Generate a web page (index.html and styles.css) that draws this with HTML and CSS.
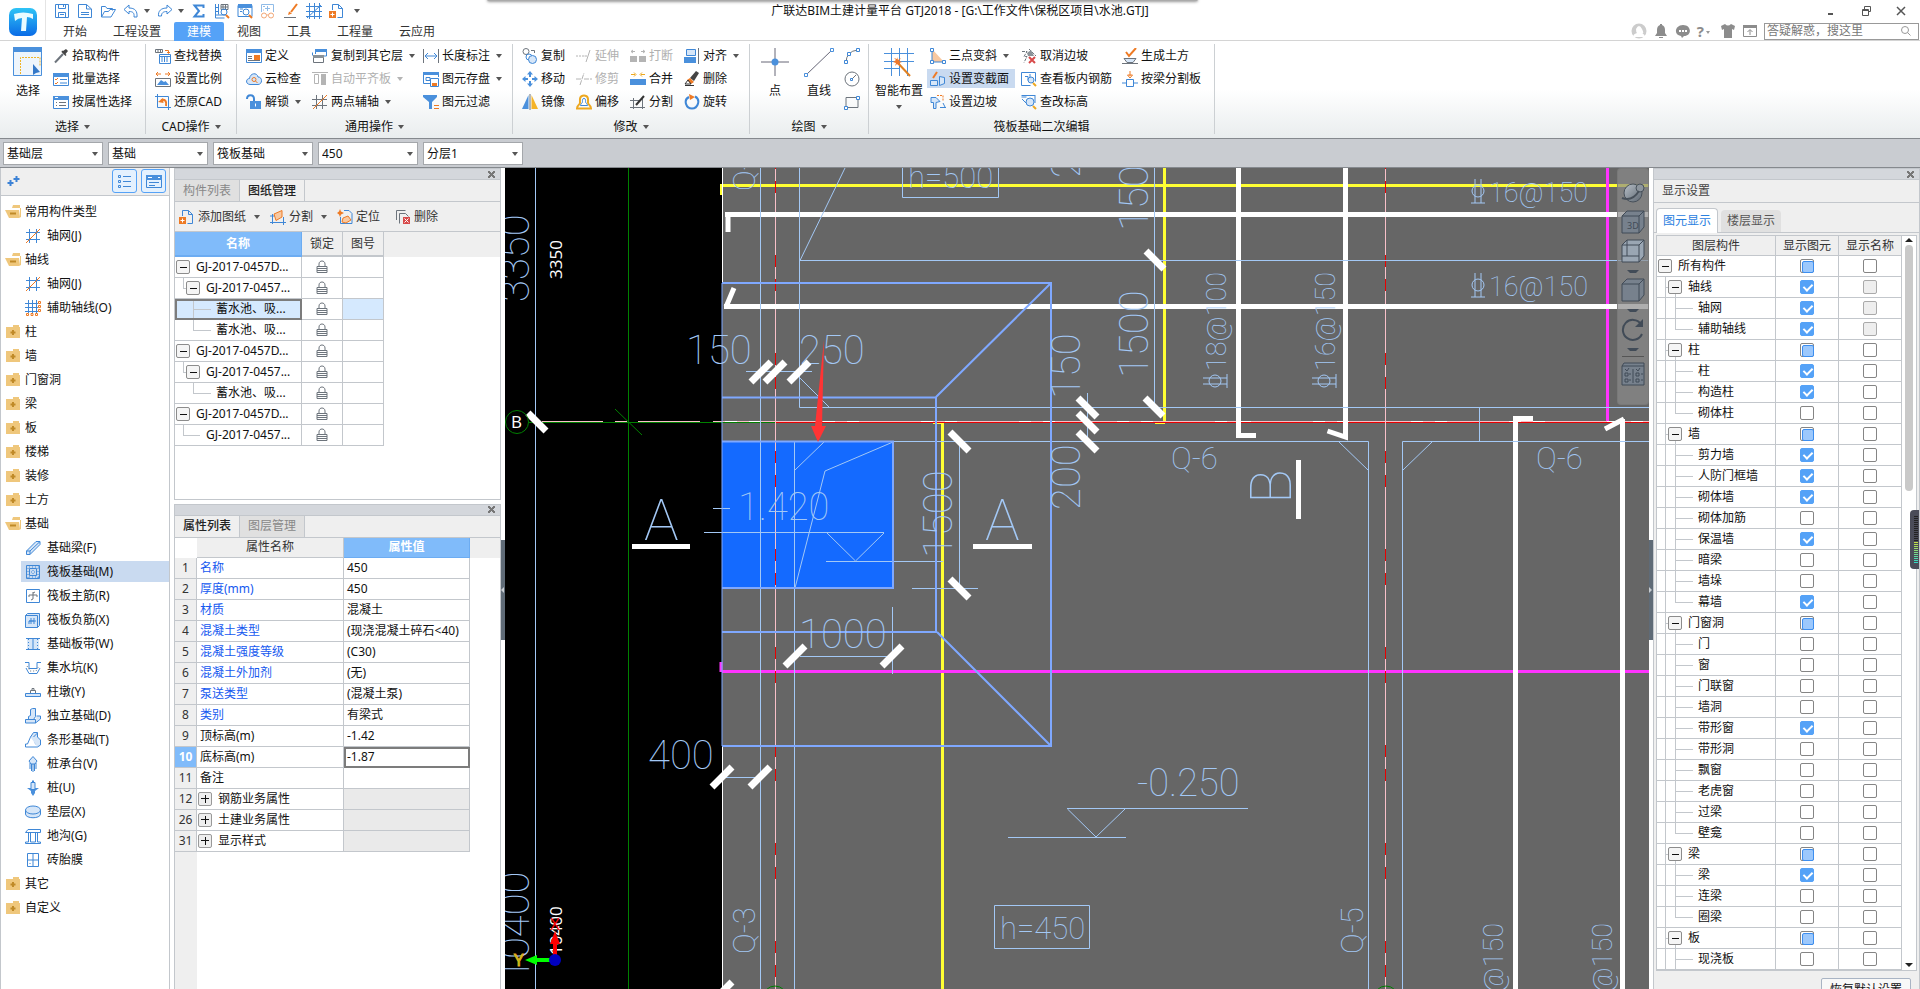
FILE: index.html
```html
<!DOCTYPE html>
<html lang="zh-CN">
<head>
<meta charset="utf-8">
<title>广联达BIM土建计量平台 GTJ2018</title>
<link rel="stylesheet" href="styles.css">
</head>
<body>
<svg class="sprite" aria-hidden="true">
  <defs>
    <linearGradient id="logo-fill" x1="0" y1="0" x2="0" y2="1"><stop offset="0" stop-color="#2fc4f6"/><stop offset="1" stop-color="#0a6be6"/></linearGradient>
    <linearGradient id="ball" x1="0" y1="0" x2="1" y2="1"><stop offset="0" stop-color="#b8c0c8"/><stop offset="1" stop-color="#5c6670"/></linearGradient>
  </defs>
  <symbol id="save" viewBox="0 0 16 16"><path class="b" d="M1.500 1.500h13v13h-13zM4.500 1.500v4h7v-4M4.500 14.500v-5h7v5M9.500 2v2M6 11.500h4"/></symbol>
  <symbol id="doc" viewBox="0 0 16 16"><path class="b" d="M1.500 14.500v-13h8l5 4.500v8.500zM9.500 1.500v4.500h5M4 9.500h8M4 11.500h8"/></symbol>
  <symbol id="open" viewBox="0 0 16 16"><path class="b" d="M1.500 14V3.500h4l1.500 2h5.500v2M1.500 14l3-5.500h4l1.500-2h5.500L11 14z"/></symbol>
  <symbol id="undo" viewBox="0 0 16 16"><path class="b" d="M1 6.500L6 2v3c6 0 8.500 3 8 9h-3c.5-4-1-5.500-5-5.500V11z"/></symbol>
  <symbol id="redo" viewBox="0 0 16 16"><path class="b" d="M15 6.500L10 2v3C4 5 1 8 1.500 13h3c0-3 1.500-4.500 5.500-4.500V11z"/></symbol>
  <symbol id="sigma" viewBox="0 0 16 16"><path class="b w2" d="M12.500 5V2.500h-9L8 8l-4.500 5.500h9V11"/></symbol>
  <symbol id="measure" viewBox="0 0 16 16"><path class="b" d="M1.500 1v14h9M1.500 12H12M4.500 1v10.500M2 4.500h2M2 8.500h2"/><path class="g" d="M7 1.500h7v5H7zM9 1.500v5M11.500 1.500v5M7 4h7"/><circle class="b" cx="10" cy="9" r="3"/><path class="o w2" d="M12 12l3 3"/></symbol>
  <symbol id="report" viewBox="0 0 16 16"><path class="b" d="M1 2.500h14v11H1zM3 6h3M3 8.500h2"/><path class="bf" d="M1 1h14v4H1z"/><circle class="b wf" cx="9" cy="9" r="3"/><path class="o w2" d="M12 12l3 3"/></symbol>
  <symbol id="glasses" viewBox="0 0 16 16"><path class="bl" d="M1.500 9V1.500h12V9M5 5.500h5M7.500 3v5M3 3.500h2M3 7h1"/><path class="ol" d="M1 12h13"/><circle class="ol wf" cx="4" cy="12.500" r="2.500"/><circle class="ol wf" cx="11" cy="12.500" r="2.500"/></symbol>
  <symbol id="pen" viewBox="0 0 16 16"><path class="o w2" d="M14 1L8 9"/><path class="of" d="M5 12l1-3.500 3 2z"/><path class="g" d="M1 14.500h12"/></symbol>
  <symbol id="grid3" viewBox="0 0 16 16"><path class="b" d="M3.500 0v16M8.500 0v16M13.500 0v16M0 3.500h16M0 8.500h16M0 13.500h16M1 15L15 2"/></symbol>
  <symbol id="adddoc" viewBox="0 0 16 16"><path class="b" d="M3.500 7V1.500h6l4 4v9h-5M9.500 1.500v4h4"/><path class="of" d="M0 8h7v7H0z"/><path class="wl" d="M3.500 9.500v4M1.500 11.500h4"/></symbol>
  <symbol id="pick" viewBox="0 0 16 16"><path class="g w2" d="M2 14.500L10 6"/><path class="df" d="M8.500 4l4 4 1-1-1-1 2.500-3-2-2-3 2-1-.5z"/></symbol>
  <symbol id="batch" viewBox="0 0 16 16"><path class="b wf" d="M.5 2.500h15v12H.5z"/><path class="bf" d="M0 2h16v4H0z"/><path class="o" d="M2 8l1 1 2-2M2 12l1 1 2-2"/><path class="b" d="M7 8.500h7M7 12h7"/></symbol>
  <symbol id="props" viewBox="0 0 16 16"><path class="b wf" d="M.5 2.500h15v12H.5z"/><path class="bf" d="M0 2h16v4H0z"/><path class="wl" d="M2 3.500h3"/><path class="g" d="M3 8.500h1M6 8.500h7M3 11.500h1M6 11.500h7"/></symbol>
  <symbol id="replace" viewBox="0 0 16 16"><path class="g" d="M.5 1.500h7v3h-7zM3 1.500v3M5.500 1.500v3"/><path class="o" d="M10 2.500h3.500V5M12 4l1.500 1.500L15 4"/><path class="b" d="M4.500 9V6.500h11v9h-11zM7 9v5M9.500 9v5M12 9v5M4.500 8.500h11"/></symbol>
  <symbol id="scale" viewBox="0 0 16 16"><path class="o" d="M1 3h5M10 3h5M3 1L1 3l2 2M13 1l2 2-2 2"/><path class="g" d="M.5 7.500h15v8H.5z"/><path class="bf" d="M2 14l4-5 3 2 1.500-1 3.500 4z"/></symbol>
  <symbol id="restore" viewBox="0 0 16 16"><path class="b" d="M2.500 0v13.500H16M0 2.500h13.500V16"/><path class="o w2" d="M11 12c1-5-1-7-5-6"/><path class="of" d="M3 8l5-4 .5 5z"/></symbol>
  <symbol id="define" viewBox="0 0 16 16"><path class="b wf" d="M.5 1.500h15v13H.5z"/><path class="bf" d="M0 1h16v4H0z"/><path class="of" d="M8 7h6v5H8z"/><path class="g" d="M2 8.500h4M2 10.500h4M2 12.500h12"/></symbol>
  <symbol id="cloud" viewBox="0 0 16 16"><path class="b lf" d="M4 13.500c-5-.5-4-6-.5-6C4 2 11 1 12 6c5 0 4.500 7.500 0 7.500z"/><circle class="o" cx="8" cy="8.500" r="2"/><path class="o" d="M9.500 10l2 2"/></symbol>
  <symbol id="unlock" viewBox="0 0 16 16"><path class="b w2" d="M1 5c0-5 7-5 7 0v3"/><path class="bf" d="M4 7h11v8H4z"/><path class="wl" d="M9.500 9.500v3"/></symbol>
  <symbol id="copyfloor" viewBox="0 0 16 16"><path class="b" d="M3.500 6V1.500h11V8H12"/><path class="bf" d="M3 1h12v3H3z"/><path class="g wf" d="M1.500 7.500h10v7h-10z"/><path class="gf" d="M1 7h11v3H1z"/><path class="b" d="M.5 4.500v3"/></symbol>
  <symbol id="flat" viewBox="0 0 16 16"><path class="dim" d="M0 1.500h16M2.500 3.500h4v9h-4z"/><path class="dimf" d="M9 3h5v11H9z"/></symbol>
  <symbol id="axis2" viewBox="0 0 16 16"><path class="g" d="M4.500 1v14M10.500 1v14M0 5.500h15M0 11.500h15"/><path class="o" d="M1 15L15 1"/></symbol>
  <symbol id="length" viewBox="0 0 16 16"><path class="g" d="M.5 1v14M15.500 1v14"/><path class="b" d="M2 8h12M5 5L2 8l3 3M11 5l3 3-3 3"/></symbol>
  <symbol id="disk" viewBox="0 0 16 16"><path class="b" d="M7 12.500H.5v-11h15V6M3 6.500h4v3H3z"/><path class="bf" d="M0 1h16v3H0z"/><path class="b wf" d="M7.500 7.500h8v8h-8z"/><path class="of" d="M9 12h5v3H9z"/></symbol>
  <symbol id="filter" viewBox="0 0 16 16"><path class="bf" d="M0 1h14v2L9 8v7H6V8L0 3z"/><path class="o" d="M11 11.500h5M11 14.500h5"/></symbol>
  <symbol id="copy" viewBox="0 0 16 16"><circle class="g" cx="4" cy="3.500" r="3"/><path class="g" d="M9 2.500h3.500V5"/><circle class="b" cx="7" cy="9" r="3"/><circle class="b lf" cx="10.500" cy="11.500" r="4"/></symbol>
  <symbol id="move" viewBox="0 0 16 16"><path class="bf" d="M8 0l3 3.500H9V6H7V3.500H5zM8 16l3-3.500H9V10H7v2.500H5zM0 8l3.500-3v2H6v2H3.500v2zM16 8l-3.500-3v2H10v2h2.500v2z"/></symbol>
  <symbol id="mirror" viewBox="0 0 16 16"><path class="bf" d="M6.500 1v14H0z"/><path class="yf" d="M9.500 1v14H16z"/><path class="g" d="M8 0v16"/></symbol>
  <symbol id="extend" viewBox="0 0 16 16"><path class="dim" d="M0 8h8" stroke-dasharray="2 1"/><path class="dim" d="M8.500 8H11M10 14l4-12"/></symbol>
  <symbol id="trim" viewBox="0 0 16 16"><path class="dim" d="M0 8h5M4 14L8 2M8 8h8" stroke-dasharray="5 1"/></symbol>
  <symbol id="offset" viewBox="0 0 16 16"><path class="y w2" d="M1 14.500c0-4 3-3 3-6 0-2-1-7 4-7s4 5 4 7c0 3 3 2 3 6z"/><path class="b wf" d="M4.500 11.500c0-2 2-2 2-4 0-1-.5-3 1.500-3s1.500 2 1.500 3c0 2 2 2 2 4z"/></symbol>
  <symbol id="break" viewBox="0 0 16 16"><path class="dimf" d="M0 8h7v6H0zM9 8h7v6H9z"/><path class="dim" d="M1 3.500h4M11 3.500h4M3 2L1 3.500 3 5M13 2l2 1.500L13 5"/></symbol>
  <symbol id="merge" viewBox="0 0 16 16"><path class="bf" d="M0 8h16v6H0z"/><path class="y" d="M1 3.500h4M11 3.500h4M4 1.500l2 2-2 2M12 1.500l-2 2 2 2"/></symbol>
  <symbol id="split" viewBox="0 0 16 16"><path class="g" d="M3.500 4v11M12.500 4v11M0 6.500h9M0 13.500h15"/><path class="d w2" d="M6 11l8-9"/></symbol>
  <symbol id="align" viewBox="0 0 16 16"><path class="b lf" d="M2.500 1.500h9v6h-9z"/><path class="bf" d="M0 9h12v6H0z"/><path class="g" d="M14.500 0v16"/></symbol>
  <symbol id="erase" viewBox="0 0 16 16"><path class="df" d="M6 7L12 0l3 2-5 8z"/><path class="of" d="M3 9l3-2 4 4-3 2z"/><path class="d" d="M1 14.500h9M1 13l3-4 3 4z"/></symbol>
  <symbol id="rotate" viewBox="0 0 16 16"><path class="b w2" d="M11 2.500c6 3 3 12-3 12S-1 6 5 3"/><path class="of" d="M5 0l6 3-5 3z"/></symbol>
  <symbol id="slope3" viewBox="0 0 16 16"><path class="pf" d="M2 1l12 13H2z"/><path class="b wf" d="M.5.500h3v3h-3zM.5 12.500h3v3h-3zM12.500 12.500h3v3h-3zM2 3.500v9M4 14h8"/></symbol>
  <symbol id="section" viewBox="0 0 16 16"><path class="b lf" d="M.5 9.500h7v5h-7zM9.500 14.500v-9l5 1v6z"/><path class="o w2" d="M3 7l4-6"/></symbol>
  <symbol id="edge" viewBox="0 0 16 16"><path class="b lf" d="M1 3.500h5l4 4-4 1v6H3.500v-6H1z"/><path class="o" d="M7 1.500h6v6" stroke-dasharray="2 1"/><path class="b" d="M10 13.500h6M13 9l2 4"/></symbol>
  <symbol id="canceledge" viewBox="0 0 16 16"><path class="g" d="M1 3.500h5l-3 5h3l-3 6M8 1l7 7" stroke-dasharray="3 1"/><path class="gf" d="M6 5l4-3 3 6H7z"/><path class="r w2" d="M8 9l6 6M14 9l-6 6"/></symbol>
  <symbol id="viewbar" viewBox="0 0 16 16"><path class="b" d="M.5 1.500h14v9M.5 1.500v13h9M4 5.500h3v4M9 3v6"/><circle class="b lf" cx="10" cy="9" r="3"/><path class="y w2" d="M12 12l3 3"/></symbol>
  <symbol id="viewlevel" viewBox="0 0 16 16"><path class="b" d="M.5 3h5M.5 1.500h14M14 2v7M1 5l4 4"/><circle class="b lf" cx="9" cy="8" r="4"/><path class="y w2" d="M12 12l3 3"/></symbol>
  <symbol id="earth" viewBox="0 0 16 16"><path class="o w2" d="M4 4l3 4 7-8"/><path class="g lf" d="M2 10.500h12l-3 4H5zM0 15.500h16"/></symbol>
  <symbol id="beamsplit" viewBox="0 0 16 16"><path class="o" d="M8 0v5M5.500 4L8 7l2.500-3z"/><path class="b" d="M4.500 8.500h7v7h-7zM0 12h4M12 12h4"/></symbol>
  <symbol id="folder" viewBox="0 0 16 16"><path class="fold" d="M8 1h6v2H8zM1 3h14v11H1z"/><path class="foldp" d="M8 6v5M5.500 8.500h5"/></symbol>
  <symbol id="folderopen" viewBox="0 0 16 16"><path class="fold" d="M8 1h7v3h1v9l-2 1H4L0 6h14l1 7V4H7z"/><path class="foldp" d="M5 9.500h6"/></symbol>
  <symbol id="axisnet" viewBox="0 0 16 16"><path class="b" d="M4.500 1v14M11.500 1v14M1 4.500h14M1 11.500h14"/><path class="o" d="M1 15L15 1"/></symbol>
  <symbol id="auxaxis" viewBox="0 0 16 16"><path class="b" d="M3.500 0v13M7.500 0v13M11.500 0v13M0 3.500h13M0 7.500h13M0 11.500h13"/><path class="o" d="M13.500 1.500h2v2h-2zM13.500 5.500h2v2h-2zM13.500 9.500h2v2h-2zM1.500 13.500h2v2h-2zM6 13.500h2v2H6zM10.500 13.500h2v2h-2z"/></symbol>
  <symbol id="beam" viewBox="0 0 16 16"><path class="b lf" d="M1.500 11L11 1.500l4 0v3L5 14.500H1.500zM1.500 11H5v3.500M5 11l10-9.500"/></symbol>
  <symbol id="raft" viewBox="0 0 16 16"><path class="b" d="M1.500 1.500h13v13h-13zM4.500 4.500h7v7h-7z"/><path class="b" stroke-dasharray="1 2" d="M1 3h14M1 13h14M3 1v14M13 1v14M6 8h5M8 6v5"/></symbol>
  <symbol id="mainbar" viewBox="0 0 16 16"><path class="b" d="M1.500 1.500h13v13h-13z"/><path class="g" d="M8 4v7l-2 1M4 9V7h8v2M10 4L8 5"/></symbol>
  <symbol id="negbar" viewBox="0 0 16 16"><path class="b lf" d="M.5 3.500h12v12H.5zM.5 3.500l2-2h12v12l-2 2"/><path class="b" d="M4 12V9h5M6 6v6M9 6v6M4 9h7"/></symbol>
  <symbol id="strip" viewBox="0 0 16 16"><path class="lf" d="M2 3h12v10H2z"/><path class="b" d="M1 2.500h14M1 13.500h14M8 3v10"/><path class="b" stroke-dasharray="1 2" d="M3.500 3v10M12.500 3v10"/></symbol>
  <symbol id="pit" viewBox="0 0 16 16"><path class="b" d="M0 2.500h4v6h8v-6h4M1 8l3 5.500h8L15 8"/><path class="g" stroke-dasharray="1 2" d="M2 6l3 5h6l3-5"/></symbol>
  <symbol id="pier" viewBox="0 0 16 16"><path class="b lf" d="M.5 9.500h15v3H.5z"/><path class="g" d="M5.500 9V6.500h5V9M7 6V4.500h2V6"/></symbol>
  <symbol id="isolated" viewBox="0 0 16 16"><path class="b lf" d="M.5 11.500h10v3.500H.5zM10.500 15l5-4V8h-4M3.500 11V8.500l2-1V1.500l2-1h3v8l-2 3"/></symbol>
  <symbol id="stripf" viewBox="0 0 16 16"><path class="b" d="M.5 15v-3h2l3-7h3l2 7h2v3z"/><path class="b lf" d="M5.500 5l3-4.500h4V5l3 3v5l-3 2M8.500 5l4-4"/></symbol>
  <symbol id="cap" viewBox="0 0 16 16"><path class="b lf" d="M8 .5L12 5l-2 3H6L4 5zM6.500 8v7M9.500 8v7M8 8v8M5 7v6M11 7v6"/></symbol>
  <symbol id="pile" viewBox="0 0 16 16"><path class="b lf" d="M6 2.500h4v7H6z"/><path class="b w2" d="M7 1.500h2"/><path class="bf" d="M2 8h4v2h4V8h4l-4 3v2l-2 3-2-3v-2z"/></symbol>
  <symbol id="cushion" viewBox="0 0 16 16"><path class="b lf" d="M.5 6v4c0 5 15 5 15 0V6"/><ellipse class="b lf" cx="8" cy="6" rx="7.500" ry="4"/></symbol>
  <symbol id="trench" viewBox="0 0 16 16"><path class="b" d="M.5 4.500L3 1.500h12.500v3h-15zM3.500 5v9H.5v1.500h15V14h-3V5M5.500 5v9h5V5"/></symbol>
  <symbol id="brick" viewBox="0 0 16 16"><path class="b" d="M2.500 1.500h11v13h-11zM8 1.500v13M2.500 8h11M5 11v1"/></symbol>
  <symbol id="splitsheet" viewBox="0 0 16 16"><path class="b" d="M2.500 5v10M13.500 8v8M0 13.500h16M0 7h5"/><path class="o pf" d="M4 5l8-3.500V8l-6 3.500z"/></symbol>
  <symbol id="locate" viewBox="0 0 16 16"><path class="b" d="M7 1.500h5l3 3v10H3.500V8"/><path class="of" d="M3 0l1 2.500L7 4 4 5.500 3 8 2 5.500 0 4l2-1.500z"/><path class="o pf" d="M6 9l5-2 3 4-5 3-4-1z"/></symbol>
  <symbol id="delsheet" viewBox="0 0 16 16"><path class="g" d="M1.500 11V1.500h9M4.500 14.500v-10h6l3 3"/><path class="rf" d="M8 8h7v7H8z"/><path class="wl" d="M9.500 9.500l4 4M13.500 9.500l-4 4"/></symbol>
  <symbol id="lock" viewBox="0 0 12 14"><path class="g" d="M3 6V4c0-4 6-4 6 0v2M1 6.500h10v6H1zM1 8.500h10M1 10.500h10"/></symbol>
  <symbol id="rebar" viewBox="0 0 16 26"><circle cx="7" cy="13" r="6"/><path d="M4 1v24M10 1v24M0 25h14"/></symbol>
</svg>

<header class="titlebar">
  <button class="logo" aria-label="应用菜单">
    <svg viewBox="0 0 30 30"><rect x="1" y="1" width="28" height="28" rx="7" fill="url(#logo-fill)"/><path d="M6 7q9-3 19 0v5q-3-2-6-2l-1 14h-5l1-13q-4 0-7 3z" fill="#e9fbff"/></svg>
  </button>
  <div class="title-main">
    <div class="title-row">
      <nav class="quick" aria-label="快速访问">
        <button aria-label="保存"><svg><use href="#save"/></svg></button>
        <button aria-label="新建"><svg><use href="#doc"/></svg></button>
        <button aria-label="打开"><svg><use href="#open"/></svg></button>
        <button aria-label="撤销" class="drop"><svg><use href="#undo"/></svg></button>
        <button aria-label="恢复" class="drop"><svg><use href="#redo"/></svg></button>
        <button aria-label="汇总"><svg><use href="#sigma"/></svg></button>
        <button aria-label="量算"><svg><use href="#measure"/></svg></button>
        <button aria-label="查看报表"><svg><use href="#report"/></svg></button>
        <button aria-label="检查"><svg><use href="#glasses"/></svg></button>
        <button aria-label="标记"><svg><use href="#pen"/></svg></button>
        <button aria-label="轴网"><svg><use href="#grid3"/></svg></button>
        <button aria-label="添加图纸"><svg><use href="#adddoc"/></svg></button>
        <button aria-label="更多" class="drop more"></button>
      </nav>
      <h1>广联达BIM土建计量平台 GTJ2018 - [G:\工作文件\保税区项目\水池.GTJ]</h1>
      <div class="window-buttons">
        <button aria-label="最小化"><svg viewBox="0 0 12 12"><path d="M3 9h5" stroke-width="2"/></svg></button>
        <button aria-label="还原"><svg viewBox="0 0 12 12"><path d="M4.500 4V1.500h6v5H9M2.500 4.500h6v6h-6zM2 5.500h7"/></svg></button>
        <button aria-label="关闭"><svg viewBox="0 0 12 12"><path d="M2 2l8 8M10 2l-8 8" stroke-width="1.500"/></svg></button>
      </div>
    </div>
    <div class="menu-row">
      <nav class="menu">
        <a href="#">开始</a><a href="#">工程设置</a><a href="#" class="active">建模</a><a href="#">视图</a><a href="#">工具</a><a href="#">工程量</a><a href="#">云应用</a>
      </nav>
      <div class="tools">
        <button aria-label="用户"><svg viewBox="0 0 16 16"><circle cx="8" cy="8" r="7.500" fill="#ccc"/><path d="M5 6q3-6 6 0t-1 4q4 1 4 4H2q0-3 4-4Q5 9 5 6" fill="#fff"/></svg></button>
        <button aria-label="通知"><svg viewBox="0 0 16 16"><path d="M7 1h2v1q3 1 3 5v3l2 3H2l2-3V7q0-4 3-5zM6 14h4v1H6z" fill="#8c8c8c"/></svg></button>
        <button aria-label="消息"><svg viewBox="0 0 16 16"><path d="M8 2c9 0 9 11 1 11l-2 2-1-2C-2 12 0 2 8 2" fill="#8c8c8c"/><path d="M4 7h2v2H4zM7 7h2v2H7zM10 7h2v2h-2z" fill="#fff"/></svg></button>
        <button class="help" aria-label="帮助">?</button>
        <button aria-label="皮肤"><svg viewBox="0 0 16 16"><path d="M1 3l4-2q3 3 6 0l4 2-1 4-2-1v9H4V6L2 7z" fill="#8c8c8c"/></svg></button>
        <button aria-label="收起功能区"><svg viewBox="0 0 16 16"><path d="M1.500 2.500h13v11h-13zM8 12V7M5.500 9L8 6.500 10.500 9" fill="none" stroke="#8c8c8c"/><path d="M1 2h14v3H1z" fill="#8c8c8c"/></svg></button>
        <label class="search"><input type="text" placeholder="答疑解惑，搜这里" aria-label="搜索"><svg viewBox="0 0 12 12"><circle cx="5" cy="5" r="3.500" fill="none" stroke="#999"/><path d="M7.500 7.500l3 3" stroke="#999"/></svg></label>
      </div>
    </div>
  </div>
  <div class="dock-edge"></div>
</header>

<section class="ribbon">
  <div class="group">
    <div class="body">
      <button class="big first"><svg viewBox="0 0 32 32"><path d="M1.500 2.500h28v27h-28z" fill="#eef5fc" stroke="#4a90dc"/><path d="M1 1h29v5H1z" fill="#4a90dc"/><path d="M8.500 28V11.500H28V20" fill="none" stroke="#f0b428" stroke-dasharray="2 1"/><path d="M21 18v11l3-2 4-1z" fill="#3478c8"/></svg>选择</button>
      <div class="cmds g1">
        <button><svg><use href="#pick"/></svg>拾取构件</button>
        <button><svg><use href="#batch"/></svg>批量选择</button>
        <button><svg><use href="#props"/></svg>按属性选择</button>
      </div>
    </div>
    <div class="caption drop">选择</div>
  </div>
  <div class="group">
    <div class="body">
      <div class="cmds g2">
        <button><svg><use href="#replace"/></svg>查找替换</button>
        <button><svg><use href="#scale"/></svg>设置比例</button>
        <button><svg><use href="#restore"/></svg>还原CAD</button>
      </div>
    </div>
    <div class="caption drop">CAD操作</div>
  </div>
  <div class="group">
    <div class="body">
      <div class="cmds g3">
        <button><svg><use href="#define"/></svg>定义</button>
        <button><svg><use href="#cloud"/></svg>云检查</button>
        <button class="drop"><svg><use href="#unlock"/></svg>解锁</button>
        <button class="drop"><svg><use href="#copyfloor"/></svg>复制到其它层</button>
        <button class="drop" disabled><svg><use href="#flat"/></svg>自动平齐板</button>
        <button class="drop"><svg><use href="#axis2"/></svg>两点辅轴</button>
        <button class="drop"><svg><use href="#length"/></svg>长度标注</button>
        <button class="drop"><svg><use href="#disk"/></svg>图元存盘</button>
        <button><svg><use href="#filter"/></svg>图元过滤</button>
      </div>
    </div>
    <div class="caption drop">通用操作</div>
  </div>
  <div class="group">
    <div class="body">
      <div class="cmds g4">
        <button><svg><use href="#copy"/></svg>复制</button>
        <button><svg><use href="#move"/></svg>移动</button>
        <button><svg><use href="#mirror"/></svg>镜像</button>
        <button disabled><svg><use href="#extend"/></svg>延伸</button>
        <button disabled><svg><use href="#trim"/></svg>修剪</button>
        <button><svg><use href="#offset"/></svg>偏移</button>
        <button disabled><svg><use href="#break"/></svg>打断</button>
        <button><svg><use href="#merge"/></svg>合并</button>
        <button><svg><use href="#split"/></svg>分割</button>
        <button class="drop"><svg><use href="#align"/></svg>对齐</button>
        <button><svg><use href="#erase"/></svg>删除</button>
        <button><svg><use href="#rotate"/></svg>旋转</button>
      </div>
    </div>
    <div class="caption drop">修改</div>
  </div>
  <div class="group">
    <div class="body draw">
      <button class="big narrow"><svg viewBox="0 0 32 32"><path d="M16 2v11M16 19v11M2 16h11M19 16h11" stroke="#667"/><circle cx="16" cy="16" r="3.500" fill="#4a90dc"/></svg>点</button>
      <button class="big narrow"><svg viewBox="0 0 32 32"><path d="M3 29L29 4" stroke="#667"/><path d="M1.500 27.500h3v3h-3zM27.500 2.500h3v3h-3z" fill="#fff" stroke="#4a90dc"/></svg>直线</button>
      <div class="cmds shapes">
        <button aria-label="弧"><svg viewBox="0 0 16 16"><path class="g" d="M2 15Q2 3 14 2"/><path class="b wf" d="M.5 12.500h3v3h-3zM3.500 4.500h3v3h-3zM12.500.5h3v3h-3z"/></svg></button>
        <button aria-label="圆"><svg viewBox="0 0 16 16"><circle class="g" cx="8" cy="8" r="7"/><path class="g" d="M8 8l4-4"/><path class="b" d="M6.500 7.500h2v2h-2z"/></svg></button>
        <button aria-label="矩形"><svg viewBox="0 0 16 16"><path class="g" d="M2 3.500h12v10H2z"/><path class="b wf" d="M12.500 2.500h3v3h-3zM.5 12.500h3v3h-3z"/></svg></button>
      </div>
    </div>
    <div class="caption drop">绘图</div>
  </div>
  <div class="group">
    <div class="body">
      <button class="big below"><svg viewBox="0 0 32 32"><path d="M8.500 2v28M16.500 2v28M24.500 2v28M1 7.500h30M1 15.500h30M1 22.500h16" stroke="#4a90dc" fill="none"/><path d="M14 16l13 14" stroke="#e08020" stroke-width="2"/><path d="M14 11l1 3 3-2-2 3 3 1-3 1 1 3-3-2-2 2 1-3-3-1 3-2-2-2 3 1z" fill="#f07828"/></svg>智能布置</button>
      <div class="cmds g6">
        <button class="drop"><svg><use href="#slope3"/></svg>三点变斜</button>
        <button class="on"><svg><use href="#section"/></svg>设置变截面</button>
        <button><svg><use href="#edge"/></svg>设置边坡</button>
        <button><svg><use href="#canceledge"/></svg>取消边坡</button>
        <button><svg><use href="#viewbar"/></svg>查看板内钢筋</button>
        <button><svg><use href="#viewlevel"/></svg>查改标高</button>
        <button><svg><use href="#earth"/></svg>生成土方</button>
        <button><svg><use href="#beamsplit"/></svg>按梁分割板</button>
      </div>
    </div>
    <div class="caption">筏板基础二次编辑</div>
  </div>
</section>

<section class="context">
  <label class="pick"><select aria-label="楼层"><option>基础层</option></select></label>
  <label class="pick"><select aria-label="构件大类"><option>基础</option></select></label>
  <label class="pick"><select aria-label="构件类型"><option>筏板基础</option></select></label>
  <label class="pick"><select aria-label="构件"><option>450</option></select></label>
  <label class="pick"><select aria-label="分层"><option>分层1</option></select></label>
</section>

<main class="workspace">
  <aside class="navtree">
    <div class="navbar">
      <svg class="plus" viewBox="0 0 14 12"><path d="M3.500 5v6M.5 8h6M9.500 1v6M6.500 4h6" fill="none" stroke="#3c82d6" stroke-width="2"/></svg>
      <button aria-label="列表视图"><svg viewBox="0 0 16 16"><path class="b" d="M1.500 2.500h2v2h-2zM1.500 7.500h2v2h-2zM1.500 12.500h2v2h-2zM6 3.500h8M6 8.500h8M6 13.500h8"/></svg></button>
      <button aria-label="面板视图"><svg viewBox="0 0 16 16"><path class="b" d="M.5 2.500h15v12H.5zM3 9.500h10M3 12.500h6"/><path class="bf" d="M0 2h16v5H0z"/><path class="wl" d="M2 4.500h4M12 4.500h2"/></svg></button>
    </div>
    <ul>
      <li><svg><use href="#folderopen"/></svg>常用构件类型</li>
      <li class="sub"><svg><use href="#axisnet"/></svg>轴网(J)</li>
      <li><svg><use href="#folderopen"/></svg>轴线</li>
      <li class="sub"><svg><use href="#axisnet"/></svg>轴网(J)</li>
      <li class="sub"><svg><use href="#auxaxis"/></svg>辅助轴线(O)</li>
      <li><svg><use href="#folder"/></svg>柱</li>
      <li><svg><use href="#folder"/></svg>墙</li>
      <li><svg><use href="#folder"/></svg>门窗洞</li>
      <li><svg><use href="#folder"/></svg>梁</li>
      <li><svg><use href="#folder"/></svg>板</li>
      <li><svg><use href="#folder"/></svg>楼梯</li>
      <li><svg><use href="#folder"/></svg>装修</li>
      <li><svg><use href="#folder"/></svg>土方</li>
      <li><svg><use href="#folderopen"/></svg>基础</li>
      <li class="sub"><svg><use href="#beam"/></svg>基础梁(F)</li>
      <li class="sub on"><svg><use href="#raft"/></svg>筏板基础(M)</li>
      <li class="sub"><svg><use href="#mainbar"/></svg>筏板主筋(R)</li>
      <li class="sub"><svg><use href="#negbar"/></svg>筏板负筋(X)</li>
      <li class="sub"><svg><use href="#strip"/></svg>基础板带(W)</li>
      <li class="sub"><svg><use href="#pit"/></svg>集水坑(K)</li>
      <li class="sub"><svg><use href="#pier"/></svg>柱墩(Y)</li>
      <li class="sub"><svg><use href="#isolated"/></svg>独立基础(D)</li>
      <li class="sub"><svg><use href="#stripf"/></svg>条形基础(T)</li>
      <li class="sub"><svg><use href="#cap"/></svg>桩承台(V)</li>
      <li class="sub"><svg><use href="#pile"/></svg>桩(U)</li>
      <li class="sub"><svg><use href="#cushion"/></svg>垫层(X)</li>
      <li class="sub"><svg><use href="#trench"/></svg>地沟(G)</li>
      <li class="sub"><svg><use href="#brick"/></svg>砖胎膜</li>
      <li><svg><use href="#folder"/></svg>其它</li>
      <li><svg><use href="#folder"/></svg>自定义</li>
    </ul>
  </aside>

  <div class="docks">
    <section class="panel drawings">
      <div class="grip"><button aria-label="关闭图纸管理"></button></div>
      <div class="tabs"><button>构件列表</button><button class="active">图纸管理</button></div>
      <div class="bar">
        <button class="drop"><svg><use href="#adddoc"/></svg>添加图纸</button>
        <button class="drop"><svg><use href="#splitsheet"/></svg>分割</button>
        <button><svg><use href="#locate"/></svg>定位</button>
        <button><svg><use href="#delsheet"/></svg>删除</button>
      </div>
      <div class="table-back">
      <table class="sheets">
        <thead><tr><th class="current">名称</th><th>锁定</th><th>图号</th></tr></thead>
        <tbody>
          <tr><td class="t0"><i class="box minus"></i>GJ-2017-0457D...</td><td><svg><use href="#lock"/></svg></td><td></td></tr>
          <tr><td class="t1"><i class="box minus"></i>GJ-2017-0457...</td><td><svg><use href="#lock"/></svg></td><td></td></tr>
          <tr class="on"><td class="t2">蓄水池、吸...</td><td><svg><use href="#lock"/></svg></td><td></td></tr>
          <tr><td class="t2 last">蓄水池、吸...</td><td><svg><use href="#lock"/></svg></td><td></td></tr>
          <tr><td class="t0"><i class="box minus"></i>GJ-2017-0457D...</td><td><svg><use href="#lock"/></svg></td><td></td></tr>
          <tr><td class="t1"><i class="box minus"></i>GJ-2017-0457...</td><td><svg><use href="#lock"/></svg></td><td></td></tr>
          <tr><td class="t2 last">蓄水池、吸...</td><td><svg><use href="#lock"/></svg></td><td></td></tr>
          <tr><td class="t0"><i class="box minus"></i>GJ-2017-0457D...</td><td><svg><use href="#lock"/></svg></td><td></td></tr>
          <tr><td class="t1 end">GJ-2017-0457...</td><td><svg><use href="#lock"/></svg></td><td></td></tr>
        </tbody>
      </table>
      </div>
    </section>

    <section class="panel props">
      <div class="grip"><button aria-label="关闭属性列表"></button></div>
      <div class="tabs"><button class="active">属性列表</button><button>图层管理</button></div>
      <div class="table-back gutter">
      <table class="attrs">
        <thead><tr><th></th><th>属性名称</th><th class="current">属性值</th></tr></thead>
        <tbody>
          <tr><th>1</th><td class="key">名称</td><td>450</td></tr>
          <tr><th>2</th><td class="key">厚度(mm)</td><td>450</td></tr>
          <tr><th>3</th><td class="key">材质</td><td>混凝土</td></tr>
          <tr><th>4</th><td class="key">混凝土类型</td><td>(现浇混凝土碎石&lt;40)</td></tr>
          <tr><th>5</th><td class="key">混凝土强度等级</td><td>(C30)</td></tr>
          <tr><th>6</th><td class="key">混凝土外加剂</td><td>(无)</td></tr>
          <tr><th>7</th><td class="key">泵送类型</td><td>(混凝土泵)</td></tr>
          <tr><th>8</th><td class="key">类别</td><td>有梁式</td></tr>
          <tr><th>9</th><td>顶标高(m)</td><td>-1.42</td></tr>
          <tr class="on"><th>10</th><td>底标高(m)</td><td>-1.87</td></tr>
          <tr><th>11</th><td>备注</td><td></td></tr>
          <tr class="fold-row"><th>12</th><td><i class="box plus-box"></i>钢筋业务属性</td><td></td></tr>
          <tr class="fold-row"><th>26</th><td><i class="box plus-box"></i>土建业务属性</td><td></td></tr>
          <tr class="fold-row"><th>31</th><td><i class="box plus-box"></i>显示样式</td><td></td></tr>
        </tbody>
      </table>
      </div>
    </section>
  </div>

  <div class="splitter"><button aria-label="折叠左侧"></button></div>

  <section class="canvas">
    <svg class="cad" viewBox="505 168 1144 821" preserveAspectRatio="xMinYMin slice">
      <rect x="722" y="168" width="927" height="821" fill="#666"/>
      <rect x="722" y="441" width="171" height="147" fill="#146aff"/>
      <path class="yellow" d="M720 185.500H1649M721.500 185v10M942.500 422V989M1164.500 168V422"/>
      <path class="thin" stroke="#ffff33" d="M933 423.500h10M1155 423.500h10"/>
      <path class="magenta" d="M722 671.500H1649M1607.500 168V422M721 662v10"/>
      <path class="thin" stroke="#008000" d="M628.500 168V989M529 422.500H776M615 409l27 26"/>
      <path class="thin" stroke="#e80000" d="M776 422.500H1649"/>
      <path class="thin" stroke="#f8c0c8" d="M542 421.500h61M615 421.500h12M638 421.500h62M713 421.500H1649M775.500 168V989M1385.500 168V989"/>
      <path class="thin" stroke="#fff" stroke-dasharray="12 12 12 62" d="M725 421.500H1649"/>
      <path class="thin" stroke="#e80000" stroke-dasharray="12 12 12 62" d="M775.500 157V989M1385.500 157V989"/>
      <path class="white" d="M725 214.500H1649M728 212v20M724 306.500H1649M726 307l8-19M1238.500 168V436M1236 435.500h20M1345.500 168V437l-18-6M1515.500 416V989M1513 418.500h20M1622.500 419V989M1624 419l-19 10M1298.500 460v59M632 546.500h58M973 546.500h59"/>
      <path class="thin" stroke="#fff" d="M722.500 168V283M722.500 746V989"/>
      <g class="line">
        <path d="M535.500 168V989M760.500 168V989M799.500 168V407.500H1649M794.500 441V989M845 168L800 260.500H1649"/>
        <path d="M893 441.500H1368.500V989M1402.500 989V441.500H1649M1479.500 407v34M1339 442l29 28M1432 442l-29 28"/>
        <path d="M902.500 168V197.500h96V168M994.500 905.500h95v43h-95zM795 470l29-28M893 442l-68 29-30 117"/>
        <path d="M704 532.500H884M827 533l28.500 28L884 533M826 561.500H943M713 508.500h17"/>
        <path d="M1067 808.500H1248M1067.500 809l28.500 28 29-28M1008 837.500h118"/>
        <path d="M746 371.500h66M799 377l30 30M1154.500 168V404M1087.500 393v48M959.500 441V588M912 588.500h66M800 656.500h88M892.500 607v67M722 777.500h38"/>
      </g>
      <path class="outline" d="M722 283H1051V746H722M722 397.500H936V632H722M722 441.500H893V588H722M1050 284L936 397M937 632l113 113"/>
      <path class="thin" stroke="#7fa8ff" d="M722 283V746"/>
      <g class="cadtext">
        <text x="686" y="364">150</text><text x="799" y="364">250</text><text x="799" y="648">1000</text><text x="648" y="769">400</text>
        <text class="level" x="738" y="520">1.420</text><text class="level" x="1137" y="796">-0.250</text>
        <text class="tall" x="644" y="540">A</text><text class="tall" x="985" y="540">A</text>
        <text class="small" x="908" y="188">h=500</text><text class="small" x="1000" y="939">h=450</text>
        <text class="small" x="1171" y="469">Q-6</text><text class="small" x="1536" y="469">Q-6</text>
        <text class="bar-size" x="1489" y="202">16@150</text><text class="bar-size" x="1489" y="296">16@150</text>
        <text transform="translate(529 302) rotate(-90)">3350</text>
        <text transform="translate(529 981) rotate(-90)">10400</text>
        <text transform="translate(1148 231) rotate(-90)">150</text>
        <text transform="translate(1148 378) rotate(-90)">1500</text>
        <text transform="translate(1080 399) rotate(-90)">150</text>
        <text transform="translate(1080 510) rotate(-90)">200</text>
        <text transform="translate(1080 178) rotate(-90)">2</text>
        <text transform="translate(952 558) rotate(-90)">1500</text>
        <text class="tall" transform="translate(1291 504) rotate(-90)">B</text>
        <text class="bar-size" transform="translate(1226 371) rotate(-90)">18@100</text>
        <text class="bar-size" transform="translate(1335 371) rotate(-90)">16@150</text>
        <text class="bar-size" transform="translate(1503 1022) rotate(-90)">16@150</text>
        <text class="bar-size" transform="translate(1612 1022) rotate(-90)">16@150</text>
        <text class="small" transform="translate(755 954) rotate(-90)">Q-3</text>
        <text class="small" transform="translate(755 191) rotate(-90)">Q-3</text>
        <text class="small" transform="translate(1363 954) rotate(-90)">Q-5</text>
      </g>
      <g class="line">
        <use href="#rebar" x="1471" y="178" width="16" height="26"/><use href="#rebar" x="1471" y="272" width="16" height="26"/>
        <use href="#rebar" width="16" height="26" transform="translate(1202 388) rotate(-90)"/><use href="#rebar" width="16" height="26" transform="translate(1311 388) rotate(-90)"/>
      </g>
      <path class="tick" d="M528 413l18 18M751 382l20-20M765 382l20-20M789 382l20-20M1146 251l18 18M1145 398l18 18M1078 398l19 19M1078 413l19 19M1078 432l19 19M950 432l19 19M950 579l19 19M785 666l20-20M882 666l20-20M712 787l20-20M750 787l20-20M712 1002l20-20"/>
      <path fill="#ff3434" d="M824 340l-9 86h-4l7 16 8-16h-4z"/>
      <g fill="none" stroke="#008000"><circle cx="517" cy="422" r="11.500"/><circle cx="775" cy="998" r="12"/><circle cx="1386" cy="998" r="12"/></g>
      <g class="axistext">
        <text x="511" y="428">B</text>
        <text transform="translate(562 279) rotate(-90)">3350</text>
        <text transform="translate(562 955) rotate(-90)">10400</text>
        <text class="x" x="550" y="930">X</text><text class="y" x="514" y="966">Y</text>
      </g>
      <path fill="#f00" d="M553 957V944h-3l5-13 5 13h-3v13z"/>
      <path fill="#0f0" d="M552 958H537v-3l-12 5 12 5v-3h15z"/>
      <circle cx="555" cy="960" r="6" fill="#0000c0"/>
    </svg>
    <div class="viewbar">
      <button aria-label="动态观察"><svg viewBox="0 0 24 24"><circle cx="12" cy="12" r="9" fill="url(#ball)" stroke="#47505a"/><circle cx="19" cy="7" r="4" fill="#8d959d" stroke="#47505a"/><path d="M1 17q10 4 17-7" fill="none" stroke="#47505a" stroke-width="2"/></svg></button>
      <button aria-label="三维"><svg viewBox="0 0 24 24"><path d="M1 6l5-5h17v16l-5 6H1zM1 6h17v17M18 6l5-5" fill="#77818d" stroke="#414b57"/><text x="6" y="19">3D</text></svg></button>
      <button aria-label="俯视" class="down"><svg viewBox="0 0 24 24"><path d="M1 6l5-5h17v16l-5 6H1zM1 6h17v17M18 6l5-5" fill="#9aa6b3" stroke="#414b57"/><path d="M6 1v16H1M6 17h12" fill="none" stroke="#414b57"/></svg></button>
      <button aria-label="实体" class="down"><svg viewBox="0 0 24 24"><path d="M1 6l5-5h17v16l-5 6H1zM1 6h17v17M18 6l5-5" fill="#77818d" stroke="#414b57"/></svg></button>
      <button aria-label="旋转视图" class="down"><svg viewBox="0 0 24 24"><path d="M20 7a10 10 0 1 0 1 10" fill="none" stroke="#414b57" stroke-width="2"/><path d="M22 2v8h-8z" fill="#414b57"/></svg></button>
      <hr>
      <button aria-label="显示设置"><svg viewBox="0 0 24 24"><path d="M1 4l2-3h20v22H1z" fill="#77818d" stroke="#414b57"/><path d="M1 4h22M12 7v14M4 7l2 2 2-3M15 7l2 2 2-3M4 11h3v3H4zM4 17h3v3H4zM15 11h3v3h-3zM15 17h3v3h-3zM8 12h2M8 18h2M20 12h2M20 18h2" fill="none" stroke="#414b57"/></svg></button>
    </div>
  </section>

  <div class="splitter right"><button aria-label="折叠右侧"></button></div>

  <aside class="panel display">
    <div class="grip"><button aria-label="关闭显示设置"></button></div>
    <h2>显示设置</h2>
    <div class="round-tabs"><button class="active">图元显示</button><button>楼层显示</button></div>
    <div class="list">
      <table class="layers">
        <thead><tr><th>图层构件</th><th>显示图元</th><th>显示名称</th></tr></thead>
        <tbody>
          <tr><td class="n0"><i class="box minus"></i>所有构件</td><td><input type="checkbox" class="part" aria-label="所有构件图元"></td><td><input type="checkbox" aria-label="所有构件名称"></td></tr>
          <tr><td class="n1"><i class="box minus"></i>轴线</td><td><input type="checkbox" checked aria-label="轴线图元"></td><td><input type="checkbox" disabled aria-label="轴线名称"></td></tr>
          <tr><td class="n2">轴网</td><td><input type="checkbox" checked aria-label="轴网图元"></td><td><input type="checkbox" disabled aria-label="轴网名称"></td></tr>
          <tr><td class="n2 last">辅助轴线</td><td><input type="checkbox" checked aria-label="辅助轴线图元"></td><td><input type="checkbox" disabled aria-label="辅助轴线名称"></td></tr>
          <tr><td class="n1"><i class="box minus"></i>柱</td><td><input type="checkbox" class="part" aria-label="柱类图元"></td><td><input type="checkbox" aria-label="柱类名称"></td></tr>
          <tr><td class="n2">柱</td><td><input type="checkbox" checked aria-label="柱图元"></td><td><input type="checkbox" aria-label="柱名称"></td></tr>
          <tr><td class="n2">构造柱</td><td><input type="checkbox" checked aria-label="构造柱图元"></td><td><input type="checkbox" aria-label="构造柱名称"></td></tr>
          <tr><td class="n2 last">砌体柱</td><td><input type="checkbox" aria-label="砌体柱图元"></td><td><input type="checkbox" aria-label="砌体柱名称"></td></tr>
          <tr><td class="n1"><i class="box minus"></i>墙</td><td><input type="checkbox" class="part" aria-label="墙图元"></td><td><input type="checkbox" aria-label="墙名称"></td></tr>
          <tr><td class="n2">剪力墙</td><td><input type="checkbox" checked aria-label="剪力墙图元"></td><td><input type="checkbox" aria-label="剪力墙名称"></td></tr>
          <tr><td class="n2">人防门框墙</td><td><input type="checkbox" checked aria-label="人防门框墙图元"></td><td><input type="checkbox" aria-label="人防门框墙名称"></td></tr>
          <tr><td class="n2">砌体墙</td><td><input type="checkbox" checked aria-label="砌体墙图元"></td><td><input type="checkbox" aria-label="砌体墙名称"></td></tr>
          <tr><td class="n2">砌体加筋</td><td><input type="checkbox" aria-label="砌体加筋图元"></td><td><input type="checkbox" aria-label="砌体加筋名称"></td></tr>
          <tr><td class="n2">保温墙</td><td><input type="checkbox" checked aria-label="保温墙图元"></td><td><input type="checkbox" aria-label="保温墙名称"></td></tr>
          <tr><td class="n2">暗梁</td><td><input type="checkbox" aria-label="暗梁图元"></td><td><input type="checkbox" aria-label="暗梁名称"></td></tr>
          <tr><td class="n2">墙垛</td><td><input type="checkbox" aria-label="墙垛图元"></td><td><input type="checkbox" aria-label="墙垛名称"></td></tr>
          <tr><td class="n2 last">幕墙</td><td><input type="checkbox" checked aria-label="幕墙图元"></td><td><input type="checkbox" aria-label="幕墙名称"></td></tr>
          <tr><td class="n1"><i class="box minus"></i>门窗洞</td><td><input type="checkbox" class="part" aria-label="门窗洞图元"></td><td><input type="checkbox" aria-label="门窗洞名称"></td></tr>
          <tr><td class="n2">门</td><td><input type="checkbox" aria-label="门图元"></td><td><input type="checkbox" aria-label="门名称"></td></tr>
          <tr><td class="n2">窗</td><td><input type="checkbox" aria-label="窗图元"></td><td><input type="checkbox" aria-label="窗名称"></td></tr>
          <tr><td class="n2">门联窗</td><td><input type="checkbox" aria-label="门联窗图元"></td><td><input type="checkbox" aria-label="门联窗名称"></td></tr>
          <tr><td class="n2">墙洞</td><td><input type="checkbox" aria-label="墙洞图元"></td><td><input type="checkbox" aria-label="墙洞名称"></td></tr>
          <tr><td class="n2">带形窗</td><td><input type="checkbox" checked aria-label="带形窗图元"></td><td><input type="checkbox" aria-label="带形窗名称"></td></tr>
          <tr><td class="n2">带形洞</td><td><input type="checkbox" aria-label="带形洞图元"></td><td><input type="checkbox" aria-label="带形洞名称"></td></tr>
          <tr><td class="n2">飘窗</td><td><input type="checkbox" aria-label="飘窗图元"></td><td><input type="checkbox" aria-label="飘窗名称"></td></tr>
          <tr><td class="n2">老虎窗</td><td><input type="checkbox" aria-label="老虎窗图元"></td><td><input type="checkbox" aria-label="老虎窗名称"></td></tr>
          <tr><td class="n2">过梁</td><td><input type="checkbox" aria-label="过梁图元"></td><td><input type="checkbox" aria-label="过梁名称"></td></tr>
          <tr><td class="n2 last">壁龛</td><td><input type="checkbox" aria-label="壁龛图元"></td><td><input type="checkbox" aria-label="壁龛名称"></td></tr>
          <tr><td class="n1"><i class="box minus"></i>梁</td><td><input type="checkbox" class="part" aria-label="梁类图元"></td><td><input type="checkbox" aria-label="梁类名称"></td></tr>
          <tr><td class="n2">梁</td><td><input type="checkbox" checked aria-label="梁图元"></td><td><input type="checkbox" aria-label="梁名称"></td></tr>
          <tr><td class="n2">连梁</td><td><input type="checkbox" aria-label="连梁图元"></td><td><input type="checkbox" aria-label="连梁名称"></td></tr>
          <tr><td class="n2 last">圈梁</td><td><input type="checkbox" aria-label="圈梁图元"></td><td><input type="checkbox" aria-label="圈梁名称"></td></tr>
          <tr><td class="n1"><i class="box minus"></i>板</td><td><input type="checkbox" class="part" aria-label="板图元"></td><td><input type="checkbox" aria-label="板名称"></td></tr>
          <tr><td class="n2">现浇板</td><td><input type="checkbox" aria-label="现浇板图元"></td><td><input type="checkbox" aria-label="现浇板名称"></td></tr>
        </tbody>
      </table>
      <div class="scroll"><i class="up"></i><i class="thumb"></i><i class="dn"></i></div>
    </div>
    <div class="foot"><button>恢复默认设置</button></div>
    <div class="meter"><i></i></div>
  </aside>
</main>
</body>
</html>
```

FILE: styles.css
```css
* { box-sizing: border-box; }
body {
  margin: 0;
  height: 100vh;
  display: flex;
  flex-direction: column;
  overflow: hidden;
  background: #fff;
  color: #111;
  font: 12px/16px "Noto Sans", "Noto Sans CJK SC", sans-serif;
}
button, input, select { font: inherit; color: inherit; }
button { background: none; border: 0; padding: 0; margin: 0; white-space: nowrap; }
h1, h2, ul { margin: 0; padding: 0; font-size: 12px; font-weight: 400; }
svg { display: block; flex: none; width: 16px; height: 16px; }
.sprite { position: absolute; width: 0; height: 0; }

/* icon strokes and fills */
.b, .bl, .o, .ol, .g, .d, .y, .r, .wl, .dim, .foldp { fill: none; }
.b { stroke: #3f87d6; }
.bl { stroke: #90bce8; }
.o { stroke: #ee7a24; }
.ol { stroke: #f2a878; }
.g { stroke: #6d747c; }
.d { stroke: #333; }
.y { stroke: #eda820; }
.r { stroke: #d84a4a; }
.wl { stroke: #fff; }
.dim { stroke: #b4b4b4; }
.w2 { stroke-width: 2; }
.wf { fill: #fff; }
.lf { fill: #d6e6f8; }
.pf { fill: #f8c8a0; }
.bf { fill: #4a90dc; }
.of { fill: #ee7a24; }
.gf { fill: #8a9298; }
.yf { fill: #f5b428; }
.rf { fill: #d84a4a; }
.df { fill: #444; }
.dimf { fill: #b4b4b4; }
.fold { fill: #efc77c; }
.foldp { stroke: #c08a28; stroke-width: 2; }

.drop::after {
  content: "";
  flex: none;
  border: 3px solid transparent;
  border-top: 4px solid #555;
  border-bottom: 0;
  margin-left: 5px;
}

/* title and menu */
.titlebar { display: flex; height: 41px; border-bottom: 1px solid #d4d4d4; position: relative; flex: none; }
.logo { width: 46px; display: flex; justify-content: center; padding-top: 7px; border-right: 1px solid #e4e4e4; }
.logo svg { width: 30px; height: 30px; }
.title-main { flex: 1; display: flex; flex-direction: column; }
.title-row { display: grid; grid-template-columns: 1fr auto 1fr; height: 22px; align-items: center; }
.title-row h1 { padding-right: 46px; }
.quick { display: flex; align-items: center; padding-left: 8px; gap: 7px; }
.quick button { display: flex; align-items: center; }
.quick .more::after { margin-left: 2px; }
.window-buttons { display: flex; justify-content: flex-end; gap: 23px; padding-right: 13px; }
.window-buttons svg { width: 12px; height: 12px; fill: none; stroke: #555; }
.menu-row { display: flex; justify-content: space-between; height: 18px; }
.menu { display: flex; padding-left: 4px; }
.menu a { padding: 2px 13px 0; color: #333; text-decoration: none; height: 19px; line-height: 16px; }
.menu .active { background: #55a2f7; color: #fff; border-radius: 2px 2px 0 0; }
.tools { display: flex; align-items: center; gap: 6px; padding-right: 1px; }
.help { color: #8c8c8c; font-size: 15px; font-weight: 700; }
.help::after { content: ""; display: inline-block; border: 2px solid transparent; border-top: 3px solid #999; border-bottom: 0; margin: 0 4px 3px 2px; }
.search { display: flex; align-items: center; width: 155px; height: 17px; border: 1px solid #999; background: #fff; padding-right: 6px; }
.search input { border: 0; padding: 0 2px; width: 100%; min-width: 0; height: 15px; outline: 0; }
.search input::placeholder { color: #777; opacity: 1; }
.search svg { width: 12px; height: 12px; }
.dock-edge { position: absolute; top: -3px; left: 487px; right: 722px; height: 4px; border-radius: 4px; background: #aaa; box-shadow: 0 1px 3px #999; }

/* ribbon */
.ribbon { display: flex; height: 98px; flex: none; border-bottom: 1px solid #85898e; background: linear-gradient(#fff 50%, #e9edee); padding-top: 3px; }
.group { display: flex; flex-direction: column; border-right: 1px solid #ccd0d3; margin-bottom: 4px; }
.body { display: flex; height: 70px; flex: none; }
.cmds { display: grid; grid-template-rows: repeat(3, 23px); grid-auto-flow: column; align-items: center; justify-items: start; }
.cmds button { display: flex; align-items: center; gap: 3px; height: 19px; padding: 0 3px; }
.cmds .drop::after { margin-left: 3px; }
.cmds button:disabled { color: #b0b0b0; }
.cmds button:disabled::after { border-top-color: #b4b4b4; }
.cmds .on { background: #c9daf0; padding: 0 6px 0 3px; }
.g1 { grid-template-columns: 95px; }
.g2 { grid-template-columns: 84px; padding-left: 6px; }
.g3 { grid-template-columns: 66px 111px 92px; padding-left: 6px; }
.g4 { grid-template-columns: 54px 54px 54px 68px; padding-left: 6px; }
.g6 { grid-template-columns: 91px 101px 95px; padding-left: 2px; }
.shapes { grid-template-columns: 27px; }
.draw { padding-left: 3px; }
.big { display: flex; flex-direction: column; align-items: center; width: 50px; gap: 5px; padding-top: 2px; }
.big svg { width: 32px; height: 32px; }
.big.first { padding-left: 6px; }
.big.narrow { width: 44px; }
.big.below { width: 56px; padding-left: 4px; }
.big.below::after { content: ""; border: 3px solid transparent; border-top: 4px solid #555; border-bottom: 0; margin-top: 1px; }
.caption { display: flex; align-items: center; justify-content: center; flex: 1; padding-top: 5px; }

.context { display: flex; gap: 5px; height: 29px; flex: none; padding: 3px; background: #c9ccd1; border-bottom: 1px solid #85898e; }
.pick { position: relative; width: 100px; height: 23px; }
.pick select { width: 100%; height: 100%; appearance: none; border: 1px solid #a4a7ab; border-radius: 0; background: #fff; padding: 0 3px; }
.pick::after { content: ""; position: absolute; right: 5px; top: 10px; border: 3px solid transparent; border-top: 4px solid #555; border-bottom: 0; }

/* workspace */
.workspace { display: flex; flex: 1; min-height: 0; }
.navtree { width: 170px; flex: none; border: 1px solid #c3c7cc; border-width: 0 1px; margin-right: 4px; }
.navbar { display: flex; align-items: center; gap: 4px; height: 28px; padding: 0 3px 2px 6px; background: #efefef; border-bottom: 1px solid #c3c7cc; }
.navbar .plus { width: 14px; height: 12px; margin-right: auto; }
.navbar button { width: 25px; height: 24px; border: 1px solid #55a2f7; border-radius: 3px; background: #e4f1fe; display: flex; align-items: center; justify-content: center; }
.navtree ul { list-style: none; padding-top: 4px; }
.navtree li { display: flex; align-items: center; gap: 4px; height: 24px; padding-left: 4px; }
.navtree .sub { gap: 6px; margin-left: 20px; }
.navtree .on { background: linear-gradient(#fff 1px, #c9daf0 1px, #c9daf0 22px, #fff 22px); }

.docks { width: 327px; flex: none; display: flex; flex-direction: column; gap: 4px; }
.panel { border: 1px solid #c3c7cc; background: #fff; display: flex; flex-direction: column; }
.drawings { flex: 331; min-height: 0; }
.props { flex: 486; min-height: 0; border-bottom: 0; }
.grip { height: 11px; flex: none; background: #d4d7dc; border-bottom: 1px solid #c3c7cc; display: flex; justify-content: flex-end; align-items: center; padding-right: 5px; }
.grip button { width: 7px; height: 7px; background: linear-gradient(45deg, transparent 42%, #777 42%, #777 58%, transparent 58%), linear-gradient(-45deg, transparent 42%, #777 42%, #777 58%, transparent 58%); }
.tabs { display: flex; height: 22px; flex: none; background: #efefef; border-bottom: 1px solid #c3c7cc; }
.tabs button { padding: 0 8px; border-right: 1px solid #c3c7cc; background: #e0e0e0; color: #888; }
.tabs .active { background: #efefef; color: #222; font-weight: 500; }
.bar { display: flex; height: 30px; flex: none; background: #efefef; border-bottom: 1px solid #c3c7cc; padding-left: 4px; color: #333; }
.bar button { display: flex; align-items: center; gap: 3px; margin-right: 15px; }
.bar .drop { margin-right: 10px; }
.table-back { background: linear-gradient(#efefef 25px, #fff 25px); flex: 1; }
.table-back.gutter { background: linear-gradient(#efefef 20px, transparent 20px), linear-gradient(90deg, #efefef 22px, #fff 22px); }

table { border-collapse: separate; border-spacing: 0; table-layout: fixed; }
th, td { padding: 0; height: 21px; border: 1px solid #c3c7cc; border-width: 0 1px 1px 0; font-weight: 400; white-space: nowrap; overflow: hidden; text-align: left; vertical-align: middle; }
td { background-color: #fff; background-repeat: no-repeat; }
th { background: #efefef; color: #333; text-align: center; }
th.current { background: #80bbfa; color: #fff; font-weight: 700; border-color: #6cacf2; }
td svg { width: 12px; height: 14px; margin: 0 auto; }
.box { float: left; width: 14px; height: 14px; margin: 1px 6px 0 1px; border: 1px solid #8c8c8c; border-radius: 2px; }
.minus { background: linear-gradient(#111, #111) 3px 6px / 7px 1px no-repeat #f5f5f5; position: relative; }
.plus-box { background: linear-gradient(#111, #111) 2px 5px / 8px 1px no-repeat, linear-gradient(#111, #111) 6px 2px / 1px 8px no-repeat #eee; }

.sheets { width: 209px; }
.sheets th { height: 25px; width: 41px; border-bottom-width: 2px; }
.sheets th:first-child { width: 127px; }
.sheets .t1 { padding-left: 10px; background-image: linear-gradient(#c3c7cc, #c3c7cc), linear-gradient(#c3c7cc, #c3c7cc); background-size: 1px 10px, 4px 1px; background-position: 8px 0, 8px 10px; }
.sheets .end { padding-left: 31px; background-size: 1px 10px, 17px 1px; }
.sheets .t2 { padding-left: 41px; background-image: linear-gradient(#c3c7cc, #c3c7cc), linear-gradient(#c3c7cc, #c3c7cc); background-size: 1px 100%, 18px 1px; background-position: 18px 0, 18px 10px; }
.sheets .last { background-size: 1px 10px, 18px 1px; }
.sheets .on td:first-child { outline: 2px solid #7c7c7c; outline-offset: -2px; background-color: #d5e9fe; }
.sheets .on td:last-child { background-color: #d5e9fe; }

.attrs { width: 295px; }
.attrs thead th { height: 20px; width: 147px; }
.attrs thead th:first-child, .attrs tbody th { width: 22px; }
.attrs thead th:first-child { background: #fff; border: 0; }
.attrs thead th:last-child { width: 126px; }
.attrs td { padding-left: 3px; }
.attrs .key { color: #1659f0; }
.attrs .box { margin-left: -2px; border-color: #999; }
.attrs .fold-row td:last-child { background: #eaeaea; }
.attrs .on th { background: #80bbfa; color: #fff; font-weight: 700; }
.attrs .on td:last-child { outline: 2px solid #7c7c7c; outline-offset: -2px; }

.splitter { width: 4px; flex: none; background: #fff; }
.splitter button { display: flex; align-items: center; width: 4px; height: 100px; margin-top: 372px; background: #5f6b77; }
.splitter button::after { content: ""; border: 3px solid transparent; border-right-color: #c9ced3; border-left: 0; }
.splitter.right button::after { border: 3px solid transparent; border-left-color: #c9ced3; border-right: 0; }

/* drawing area */
.canvas { flex: 1; min-width: 0; position: relative; background: #000; overflow: hidden; }
.cad { width: 100%; height: 100%; }
.cad path:not([fill]) { fill: none; }
.cad .thin { stroke-width: 1; }
.yellow { stroke: #ffff33; stroke-width: 3; }
.magenta { stroke: #ff33ff; stroke-width: 3; }
.white { stroke: #fff; stroke-width: 5; }
.tick { stroke: #fff; stroke-width: 7; }
.line { stroke: #a3c8f5; fill: none; }
.outline { stroke: #7fa8ff; stroke-width: 2; }
.cadtext { fill: #a3c8f5; font: 100 40px Roboto, "Open Sans", sans-serif; }
.cadtext .level { font-size: 38px; }
.cadtext .small { font-size: 31px; }
.cadtext .bar-size { font-size: 27px; }
.cadtext .tall { font-size: 58px; }
.axistext { fill: #fff; font: 17px "Open Sans", sans-serif; }
.axistext .x { fill: #f00; }
.axistext .y { fill: #0f0; }

.viewbar { position: absolute; top: 0; right: 0; width: 32px; height: 237px; border-radius: 4px; background: rgba(140, 140, 140, 0.7); border: 1px solid rgba(120, 120, 120, 0.8); display: flex; flex-direction: column; align-items: center; gap: 5px; padding-top: 12px; }
.viewbar svg { width: 24px; height: 24px; }
.viewbar text { font-size: 9px; fill: #414b57; }
.viewbar .down::after { content: ""; display: block; width: 6px; margin: 7px auto 0; border: 3px solid transparent; border-top-color: #414b57; border-bottom: 0; }
.viewbar hr { width: 22px; margin: 0; border: 0; border-top: 1px solid #555; }

/* display settings */
.display { width: 267px; flex: none; background: #efefef; position: relative; border-bottom: 0; overflow: hidden; }
.display h2 { height: 23px; flex: none; padding: 3px 8px; border-bottom: 1px solid #c3c7cc; color: #444; }
.round-tabs { display: flex; align-items: flex-end; gap: 3px; height: 30px; flex: none; padding-left: 2px; border-bottom: 1px solid #c3c7cc; }
.round-tabs button { height: 22px; padding: 0 6px; border-radius: 4px 4px 0 0; background: #e0e0e0; color: #555; }
.round-tabs .active { height: 25px; margin-bottom: -1px; background: #fff; color: #2a80e0; border: 1px solid #c3c7cc; border-bottom: 0; }
.list { display: flex; flex: none; margin: 2px 2px 0; border: 1px solid #c3c7cc; background: #fff; }
.layers { width: 245px; flex: none; }
.layers th { width: 63px; }
.layers thead th { height: 20px; }
.layers th:first-child { width: 119px; }
.layers td { background-image: linear-gradient(#c3c7cc, #c3c7cc), linear-gradient(#c3c7cc, #c3c7cc), linear-gradient(#c3c7cc, #c3c7cc); background-size: 0 0; }
.layers .n1 { padding-left: 10px; background-size: 1px 100%, 3px 1px, 1px 6px; background-position: 8px 0, 8px 10px, 18px 100%; }
.layers .n2 { padding-left: 41px; background-size: 1px 100%, 18px 1px, 1px 100%; background-position: 8px 0, 18px 10px, 18px 0; }
.layers .n2.last { background-size: 1px 100%, 18px 1px, 1px 10px; }
input[type="checkbox"] { appearance: none; display: block; width: 14px; height: 14px; margin: 0 auto; border: 1px solid #858585; border-radius: 2px; background: #fff; }
input[type="checkbox"]:disabled { background: #eee; border-color: #aaa; }
input[type="checkbox"]:checked { background: #55a2f7; border-color: #55a2f7; }
input[type="checkbox"]:checked::after { content: ""; display: block; width: 4px; height: 7px; margin: 1px 0 0 4px; border: solid #fff; border-width: 0 2px 2px 0; transform: rotate(45deg); }
input.part::after { content: ""; display: block; width: 10px; height: 10px; margin: 1px; border: 1px solid #3c8ef0; background: #9cc8fc; border-radius: 2px; }
.scroll { flex: 1; display: flex; flex-direction: column; align-items: center; padding: 2px 0; }
.scroll .up { border: 4px solid transparent; border-bottom-color: #222; border-top: 0; }
.scroll .thumb { width: 8px; height: 246px; margin: 3px 0 auto; border-radius: 4px; background: #c9c9c9; }
.scroll .dn { border: 4px solid transparent; border-top-color: #222; border-bottom: 0; margin-bottom: 1px; }
.foot { display: flex; flex: none; justify-content: flex-end; padding: 7px 8px; }
.foot button { height: 24px; width: 90px; flex: none; border: 1px solid #a9b4c4; border-radius: 2px; background: #f8f8f8; }
.meter { position: absolute; right: -1px; top: 341px; width: 10px; height: 59px; border-radius: 4px 0 0 4px; background: #4a4c58; padding: 6px 2px 6px 4px; }
.meter i { display: block; height: 100%; background: repeating-linear-gradient(transparent 0 1px, #4a4c58 1px 2px), linear-gradient(#222 55%, #c8e040 55%, #30d8c8); }
```
